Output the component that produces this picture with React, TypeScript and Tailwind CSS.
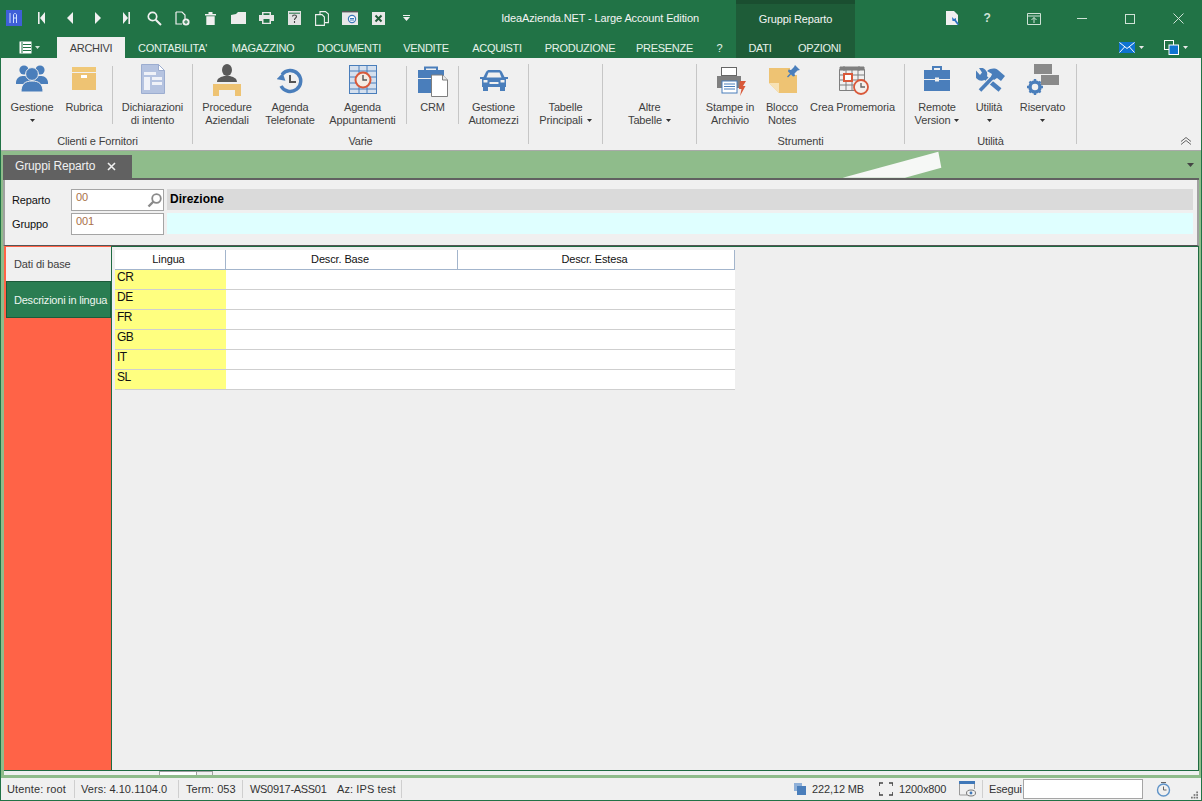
import React from "react";

const B = "#4a7ebb";
const Tan = "#eec373";
const G = "#7f7f7f";
const R = "#d9593a";

const Caret = ({ c = "#333" }: { c?: string }) => (
  <svg width="5" height="3" viewBox="0 0 5 3" className="inline-block"><path d="M0 0h5L2.5 3z" fill={c} /></svg>
);

const Q = ({ children }: { children: React.ReactNode }) => (
  <div className="w-[28px] h-full flex items-center justify-center">{children}</div>
);

const quick = [
  <svg key="l" width="16" height="16" viewBox="0 0 16 16"><rect width="16" height="16" fill="#3f5fd8" /><path d="M4 3v10M7.5 13V5c0-2 3-2 3 0v8M7.5 8h3" stroke="#cfe0ff" fill="none" /></svg>,
  <svg key="a" width="8" height="12" viewBox="0 0 8 12"><path d="M0 0h1.6v12H0zM7 0v12L2 6z" fill="#f0f0f0" /></svg>,
  <svg key="b" width="8" height="12" viewBox="0 0 8 12"><path d="M7 0v12L1 6z" fill="#f0f0f0" /></svg>,
  <svg key="c" width="8" height="12" viewBox="0 0 8 12"><path d="M1 0v12l6-6z" fill="#f0f0f0" /></svg>,
  <svg key="d" width="8" height="12" viewBox="0 0 8 12"><path d="M1 0v12l5-6zM6.4 0H8v12H6.4z" fill="#f0f0f0" /></svg>,
  <svg key="e" width="15" height="15" viewBox="0 0 15 15"><circle cx="5.5" cy="5.5" r="4.2" stroke="#f0f0f0" strokeWidth="1.7" fill="none" /><path d="M8.7 8.7L14 14" stroke="#f0f0f0" strokeWidth="2" /></svg>,
  <svg key="f" width="15" height="15" viewBox="0 0 15 15"><path d="M1 1h6l3 3v4M1 1v12h6" stroke="#f0f0f0" strokeWidth="1.2" fill="none" /><circle cx="11" cy="11" r="3.6" fill="#f0f0f0" /><path d="M11 9v4M9 11h4" stroke="#217346" /></svg>,
  <svg key="g" width="11" height="13" viewBox="0 0 11 13"><path d="M0 2h11v1.4H0zM3.5 0h4v2h-4zM1.3 4.2h8.4V13H1.3z" fill="#f0f0f0" /></svg>,
  <svg key="h" width="15" height="12" viewBox="0 0 15 12"><path d="M0 3l5-1 2-2h8v12H0z" fill="#ececec" /></svg>,
  <svg key="i" width="15" height="12" viewBox="0 0 15 12"><path d="M3 0h9v3h3v6h-3v3H3V9H0V3h3z" fill="#e6e6e6" /><path d="M4.5 1.2h6V3h-6zM4.5 7h6v3.8h-6z" fill="#217346" /></svg>,
  <svg key="j" width="13" height="14" viewBox="0 0 13 14"><path d="M0 0h13v14H0z" fill="#e2e2e2" /><path d="M1 2.2h11" stroke="#217346" /><path d="M4.5 5.5c0-2 4-2 4 0 0 1.500-2 1.500-2 3.500M6.500 10v2" stroke="#444" fill="none" strokeWidth="1.1" /></svg>,
  <svg key="k" width="14" height="15" viewBox="0 0 14 15"><path d="M5 3V.6h5.5L13.4 3v8.6H10M.6 3.6H7l2.4 2.4v8.4H.6z" stroke="#f0f0f0" strokeWidth="1.1" fill="none" /></svg>,
  <svg key="m" width="16" height="14" viewBox="0 0 16 14"><rect width="16" height="14" fill="#e8e8e8" /><rect y="0" width="16" height="1.4" fill="#555" /><circle cx="10" cy="8" r="3.6" fill="#fff" stroke="#3a78b8" strokeWidth="1.2" /><path d="M8 7.5h4M8 9h4" stroke="#3a78b8" /></svg>,
  <svg key="n" width="13" height="13" viewBox="0 0 13 13"><rect width="13" height="13" fill="#e8e8e8" /><path d="M3.5 3.5l6 6M9.5 3.5l-6 6" stroke="#1e5c38" strokeWidth="2" /></svg>,
  <svg key="o" width="7" height="6" viewBox="0 0 7 6"><path d="M0 0h7v1H0zM0 2h7L3.5 6z" fill="#f0f0f0" /></svg>,
];

const Btn = ({ w, icon, l1, l2, caret }: { w: string; icon?: React.ReactNode; l1: string; l2?: string; caret?: "inline" | "below" }) => (
  <div className={`${w} shrink-0 flex flex-col items-center text-[#3f3f3f]`}>
    <div className="h-[43px] pt-[6px] flex justify-center items-start">{icon}</div>
    <div className="h-[13px] leading-[13px] whitespace-nowrap">{l1}</div>
    <div className="h-[13px] leading-[13px] whitespace-nowrap flex items-center justify-center gap-[4px]">
      {l2}
      {caret && <Caret />}
    </div>
  </div>
);

const Short = () => <div className="w-px h-[58px] mt-[8px] bg-[#c6c6c6] shrink-0" />;
const Full = () => <div className="w-px h-[80px] mt-[6px] bg-[#c6c6c6] shrink-0" />;
const Group = ({ w, label, children }: { w: string; label?: string; children: React.ReactNode }) => (
  <div className={`${w} shrink-0 flex flex-col`}>
    <div className="flex h-[77px]">{children}</div>
    <div className="h-[13px] leading-[13px] text-center text-[#3f3f3f]">{label}</div>
  </div>
);

const People = (
  <svg width="32" height="28" viewBox="0 0 32 28" fill={B}>
    <circle cx="8" cy="6" r="4.6" /><circle cx="24" cy="6" r="4.6" />
    <path d="M0 18c1-5 4-6 8-6s7 1 8 6v2H0zM16 18c1-5 4-6 8-6s7 1 8 6v2H16z" />
    <circle cx="16" cy="10" r="6.4" stroke="#f0f0f0" />
    <path d="M5 28c0-8 4-11 11-11s11 3 11 11z" stroke="#f0f0f0" />
  </svg>
);
const Box = (
  <svg width="24" height="23" viewBox="0 0 24 23" className="mt-[3px]"><rect width="24" height="5" fill="#f0c878" /><rect y="6" width="24" height="17" fill={Tan} /><rect x="9" y="8" width="6" height="3" fill="#fff" /></svg>
);
const Decl = (
  <svg width="24" height="30" viewBox="0 0 24 30"><path d="M.5.5h17l6 6v23H.5z" fill="#b5c3e0" stroke="#9cadd0" /><path d="M17.5.5v6h6z" fill="#fff" stroke="#9cadd0" /><path d="M3 8h12v3H3zM3 13h6v13H3zM11 13h10v3H11zM11 18h10v3H11z" fill="#f0f2f8" /></svg>
);
const Proc = (
  <svg width="28" height="32" viewBox="0 0 28 32"><ellipse cx="14" cy="6" rx="5" ry="6" fill="#595959" /><path d="M4 18c0-4 4-5 7-6h6c3 1 7 2 7 6z" fill="#595959" /><path d="M0 20h28v12h-6v-6H6v6H0z" fill={Tan} /></svg>
);
const Hist = (
  <svg width="26" height="26" viewBox="0 0 26 26" className="mt-[4px]"><path d="M5 6.5A10.5 10.5 0 1 1 4 18" fill="none" stroke={B} strokeWidth="3.4" /><path d="M0 12h9L5 5z" fill={B} transform="rotate(10 5 9)" /><path d="M13 7v7h6" fill="none" stroke="#555" strokeWidth="2" /></svg>
);
const Appt = (
  <svg width="28" height="29" viewBox="0 0 28 29" className="mt-[1px]"><rect x=".5" y=".5" width="27" height="28" fill="#d5e0ee" stroke={B} /><path d="M1 6h26M1 12h26M1 18h26M1 24h26M10 1v28M18 1v28" stroke={B} /><circle cx="14" cy="15" r="7.5" fill="#f4ece4" stroke={R} strokeWidth="2" /><path d="M14 10v5h4" stroke="#555" strokeWidth="1.4" fill="none" /></svg>
);
const Crm = (
  <svg width="30" height="31" viewBox="0 0 30 31" className="mt-[2px]"><path d="M7 5V1.5h12V5" stroke={B} strokeWidth="2" fill="none" /><rect y="4" width="26" height="8" fill={B} /><rect y="13" width="26" height="14" fill={B} /><path d="M13.5 9h11l5 5v16.500h-16z" fill="#fff" stroke="#7f7f7f" /><path d="M24.500 9v5h5" fill="#e8e8e8" stroke="#7f7f7f" /></svg>
);
const Car = (
  <svg width="28" height="21" viewBox="0 0 28 21" fill={B} className="mt-[6px]"><path d="M6 2c1-1.500 2-2 3-2h10c1 0 2 .5 3 2l2.500 5H28v2h-2v8H2V9H0V7h3.500z" /><rect x="3" y="16" width="5" height="5" /><rect x="20" y="16" width="5" height="5" /><path d="M6.500 7.500l2-5h11l2 5z" fill="#f0f0f0" /><path d="M3.500 10h4v2.500h-4zM20.500 10h4v2.500h-4zM9.500 12h9v2h-9z" fill="#f0f0f0" /></svg>
);
const Printer = (
  <svg width="29" height="29" viewBox="0 0 29 29" className="ml-[3px] mt-[3px]"><rect x="4.500" y=".5" width="15" height="8" fill="#fff" stroke="#666" /><path d="M0 9h24v12H0z" fill="#7f7f7f" /><rect x="5" y="14" width="15" height="12" fill="#fff" stroke={B} /><path d="M7 17h11M7 19.500h11M7 22h11" stroke={B} /><path d="M23 14h6l-3 5h2.500L23 29l1.500-7H22z" fill={R} /></svg>
);
const Note = (
  <svg width="31" height="30" viewBox="0 0 31 30" className="ml-[5px] mt-[1px]"><path d="M0 3h28v25H10L0 18z" fill={Tan} /><path d="M0 18h10v10z" fill="#f7e2b5" /><path d="M21 0h10v10H21z" fill="#f0f0f0" /><path d="M26 0l5 5-2.500 .5-3 3 .5 2.500-2 .5-2-2-3 3-1-1 3-3-2-2 .5-2 2.500.5 3-3z" fill={B} /></svg>
);
const Cal = (
  <svg width="30" height="30" viewBox="0 0 30 30" className="ml-[3px] mt-[1px]"><path d="M.5 4.500h25v21H.5zM.5 10h25M.5 15h25M.5 20h25M7 4v22M13 4v22M19 4v22" stroke={G} fill="none" /><path d="M5 1v5M20 1v5M1 2h24v3H1z" fill={G} stroke={G} /><rect x="5" y="9" width="8" height="7" fill="#fff" stroke={R} strokeWidth="2" /><circle cx="22" cy="22" r="7" fill="#f4f0ec" stroke={R} strokeWidth="1.800" /><path d="M22 18v4h4" stroke="#666" strokeWidth="1.400" fill="none" /></svg>
);
const Case = (
  <svg width="26" height="25" viewBox="0 0 26 25" className="mt-[2px]"><path d="M9 4V1h8v3" stroke={B} strokeWidth="2" fill="none" /><rect y="4" width="26" height="9" fill={B} /><rect y="14" width="26" height="11" fill={B} /><rect x="11" y="11.500" width="4" height="4" fill="#f0f0f0" /></svg>
);
const Tools = (
  <svg width="29" height="24" viewBox="0 0 29 24" className="ml-[3px] mt-[4px]">
    <path d="M6 7L24 22" stroke={B} strokeWidth="4.500" />
    <path d="M0 2.500a6.500 6.500 0 0 0 9 9l2-3.500a6.500 6.500 0 0 0-8-8l3 4.500-2 2.500z" fill={B} />
    <path d="M4 22.500L19 7" stroke="#f0f0f0" strokeWidth="6" />
    <path d="M4 22.500L19 7" stroke={B} strokeWidth="3.600" />
    <path d="M11 3c4-3 8-3 11-1l7 6-4 5-4-3-3 2-3-3 1-3z" fill={B} />
  </svg>
);
const Res = (
  <svg width="32" height="31" viewBox="0 0 32 31"><rect x="7" width="18" height="10" fill="#8a8a8a" /><rect x="14" y="11" width="18" height="10" fill="#8a8a8a" /><circle cx="8" cy="23" r="5" fill="none" stroke={B} strokeWidth="3.500" /><path d="M8 15v4M8 27v4M0 23h4M12 23h4M2.500 17.500l2.500 2.500M11 26l2.500 2.500M2.500 28.500L5 26M11 20l2.500-2.500" stroke={B} strokeWidth="2.400" /></svg>
);

const Tab = ({ w, label, active }: { w: string; label: string; active?: boolean }) => (
  <div className={`${w} h-full shrink-0 flex items-center justify-center whitespace-nowrap tracking-[-0.3px] pt-[1px] ${active ? "bg-[#f0f0f0] text-[#3f3f3f]" : "text-[#e6f2ea]"}`}>{label}</div>
);

const rows = ["CR", "DE", "FR", "GB", "IT", "SL"];

const Sb = ({ w, children }: { w?: string; children: React.ReactNode }) => (
  <div className={`${w ?? ""} h-full flex items-center shrink-0 whitespace-nowrap`}>{children}</div>
);
const SbSep = () => <div className="w-px h-[18px] bg-[#cfcfcf] shrink-0" />;

export default function App() {
  return (
    <div className="w-[1202px] h-[801px] flex flex-col bg-[#217346] overflow-hidden text-[11px] leading-[13px] tracking-[-0.13px] text-[#222]" style={{ fontFamily: '"Liberation Sans", Arial, sans-serif' }}>
      {/* title bar */}
      <div className="h-[37px] flex shrink-0 items-stretch">
        <div className="w-[464px] flex pb-[1px]">{quick.map((q, i) => <Q key={i}>{q}</Q>)}</div>
        <div className="w-[272px] flex items-center justify-center text-[#f4f4f4]">IdeaAzienda.NET - Large Account Edition</div>
        <div className="w-[119px] bg-[#1e5c38] border-t-[4px] border-t-[#1a4e30] flex items-center justify-center text-[#f4f4f4] pb-[3px]">Gruppi Reparto</div>
        <div className="flex-1 flex items-center">
          <div className="w-[116px] flex justify-center pl-[80px]">
            <svg width="14" height="15" viewBox="0 0 14 15"><path d="M0 0h8l4 4v10H0z" fill="#f0f0f0" /><path d="M6 6l2 2 2-1v2l3 4-1.500 1-3-4-2 0z" fill="#2b72c0" /></svg>
          </div>
          <div className="w-[32px] flex justify-center text-[#cfe2d6] font-bold text-[12px]">?</div>
          <div className="w-[62px] flex justify-center"><svg width="14" height="12" viewBox="0 0 14 12"><path d="M.5.5h13v11H.500zM.5 3h13M7 10V4.500M4.500 7L7 4.500 9.500 7" stroke="#cfe2d6" fill="none" /></svg></div>
          <div className="w-[34px] flex justify-center"><div className="w-[10px] h-px bg-[#cfe2d6]" /></div>
          <div className="w-[62px] flex justify-center"><div className="w-[10px] h-[10px] border border-[#cfe2d6]" /></div>
          <div className="w-[34px] flex justify-center"><svg width="11" height="11" viewBox="0 0 11 11"><path d="M.5.5l10 10M10.500.5l-10 10" stroke="#cfe2d6" /></svg></div>
        </div>
      </div>
      {/* ribbon tabs */}
      <div className="h-[21px] flex shrink-0 items-stretch">
        <div className="w-[57px] flex items-center pl-[19px] gap-[3px]">
          <svg width="13" height="13" viewBox="0 0 13 13"><path d="M.5.5h12v12H.5z" fill="#fff" /><path d="M3 1v11M4 3.500h8M4 6.500h8M4 9.500h8" stroke="#217346" /></svg>
          <Caret c="#cfe2d6" />
        </div>
        <Tab w="w-[68px]" label="ARCHIVI" active />
        <Tab w="w-[95px]" label="CONTABILITA'" />
        <Tab w="w-[86px]" label="MAGAZZINO" />
        <Tab w="w-[86px]" label="DOCUMENTI" />
        <Tab w="w-[68px]" label="VENDITE" />
        <Tab w="w-[74px]" label="ACQUISTI" />
        <Tab w="w-[92px]" label="PRODUZIONE" />
        <Tab w="w-[77px]" label="PRESENZE" />
        <Tab w="w-[33px]" label="?" />
        <div className="w-[119px] bg-[#1e5c38] flex">
          <Tab w="w-[48px]" label="DATI" />
          <Tab w="w-[71px]" label="OPZIONI" />
        </div>
        <div className="flex-1 flex items-center pl-[264px] gap-[4px]">
          <svg width="16" height="11" viewBox="0 0 16 11"><rect width="16" height="11" fill="#0f74d1" /><path d="M.5.5L8 6.500 15.500.5M.5 10.500L5.500 5M15.500 10.500L10.500 5" stroke="#fff" fill="none" /></svg>
          <Caret c="#e8e8e8" />
          <svg width="15" height="15" viewBox="0 0 15 15" className="ml-[16px]"><rect x=".5" y=".5" width="9" height="9" fill="#217346" stroke="#fff" /><rect x="5" y="5" width="9.500" height="9.500" fill="#0f74d1" stroke="#fff" /></svg>
          <Caret c="#e8e8e8" />
        </div>
      </div>
      {/* ribbon */}
      <div className="h-[93px] shrink-0 ml-px mr-px bg-[#f0f0f0] border-b border-b-[#a9a9a9] flex pl-[2px]">
        <Group w="w-[189px]" label="Clienti e Fornitori">
          <Btn w="w-[58px]" icon={People} l1="Gestione" caret="below" />
          <Btn w="w-[46px]" icon={Box} l1="Rubrica" />
          <div className="w-[5px]" />
          <Short />
          <Btn w="w-[79px]" icon={Decl} l1="Dichiarazioni" l2="di intento" />
        </Group>
        <Full />
        <Group w="w-[335px]" label="Varie">
          <Btn w="w-[68px]" icon={Proc} l1="Procedure" l2="Aziendali" />
          <Btn w="w-[58px]" icon={Hist} l1="Agenda" l2="Telefonate" />
          <Btn w="w-[87px]" icon={Appt} l1="Agenda" l2="Appuntamenti" />
          <Short />
          <Btn w="w-[51px]" icon={Crm} l1="CRM" />
          <Short />
          <Btn w="w-[69px]" icon={Car} l1="Gestione" l2="Automezzi" />
        </Group>
        <Full />
        <Group w="w-[73px]"><Btn w="w-[73px]" l1="Tabelle" l2="Principali" caret="inline" /></Group>
        <Full />
        <Group w="w-[93px]"><Btn w="w-[93px]" l1="Altre" l2="Tabelle" caret="inline" /></Group>
        <Full />
        <Group w="w-[207px]" label="Strumenti">
          <Btn w="w-[66px]" icon={Printer} l1="Stampe in" l2="Archivio" />
          <Btn w="w-[38px]" icon={Note} l1="Blocco" l2="Notes" />
          <Btn w="w-[103px]" icon={Cal} l1="Crea Promemoria" />
        </Group>
        <Full />
        <Group w="w-[171px]" label="Utilità">
          <Btn w="w-[64px]" icon={Case} l1="Remote" l2="Version" caret="inline" />
          <Btn w="w-[40px]" icon={Tools} l1="Utilità" caret="below" />
          <Btn w="w-[67px]" icon={Res} l1="Riservato" caret="below" />
        </Group>
        <Full />
        <div className="flex-1 flex items-end justify-end pb-[5px] pr-[9px]">
          <svg width="12" height="8" viewBox="0 0 12 8" fill="none" stroke="#666"><path d="M1 4.500L6 .5l5 4M1 7.500L6 3.500l5 4" /></svg>
        </div>
      </div>
      {/* middle */}
      <div className="flex-1 min-h-0 mx-px bg-[#8fbc8b] flex flex-col pl-[2px] pr-[1px]">
        <div className="h-[27px] shrink-0 flex items-end justify-between relative">
          <div className="w-[129px] h-[23px] bg-[#616161] text-[#f0f0f0] text-[12px] flex items-center pl-[12px]">
            <span className="w-[92px]">Gruppi Reparto</span>
            <svg width="9" height="9" viewBox="0 0 9 9"><path d="M1 1l7 7M8 1L1 8" stroke="#f0f0f0" strokeWidth="1.600" /></svg>
          </div>
          <svg width="100" height="27" viewBox="0 0 100 27" className="absolute left-[839px] top-0"><path d="M.7 26.700L96.300.7l3 16-36.300 10z" fill="#f6f8f6" /></svg>
          <svg width="7" height="4" viewBox="0 0 7 4" className="mb-[11px] mr-[6px]"><path d="M0 0h7L3.500 4z" fill="#444" /></svg>
        </div>
        <div className="h-[2px] shrink-0 bg-[#616161] mr-[1px]" />
        {/* header panel */}
        <div className="h-[66px] shrink-0 mr-[1px] bg-[#f0f0f0] border-l-2 border-r-2 border-[#a0a0a0] border-b border-b-[#555] pt-[9px] pl-[7px] pr-[4px] flex flex-col gap-[2px]">
          <div className="flex h-[22px] items-stretch">
            <div className="w-[59px] flex items-center pt-[1px] text-[#111]">Reparto</div>
            <div className="w-[93px] border border-[#a5a5a5] bg-white flex justify-between pl-[4px] pr-[1px] text-[#a9704a]">
              <span className="leading-[14px]">00</span>
              <svg width="15" height="15" viewBox="0 0 15 15" className="mt-[3px]"><circle cx="9.500" cy="5.500" r="4.300" stroke="#8a8a8a" strokeWidth="1.800" fill="none" /><path d="M6.500 8.500L1.500 13.500" stroke="#8a8a8a" strokeWidth="2.400" /></svg>
            </div>
            <div className="flex-1 ml-[3px] h-[21px] bg-[#dadada] flex items-center pl-[3px] font-bold text-[12px] tracking-normal text-black">Direzione</div>
          </div>
          <div className="flex h-[22px] items-stretch">
            <div className="w-[59px] flex items-center pt-[1px] text-[#111]">Gruppo</div>
            <div className="w-[93px] border border-[#a5a5a5] bg-white pl-[4px] text-[#a9704a] leading-[14px]">001</div>
            <div className="flex-1 ml-[3px] h-[21px] bg-[#dfffff]" />
          </div>
        </div>
        {/* content */}
        <div className="h-[525px] shrink-0 flex bg-[#f0f0f0] ml-px mr-[1px] border-r border-[#1f6b42] border-b border-b-[#1f6b42]">
          <div className="w-[107px] shrink-0 bg-[#ff6347] border-t border-t-[#ff6347] pl-[2px] flex flex-col">
            <div className="h-[34px] bg-[#f0f0f0] flex items-center pl-[8px] pt-[1px] text-[#3f3f3f]">Dati di base</div>
            <div className="h-[37px] bg-[#2a7d52] border border-[#1d5a3a] flex items-center pl-[7px] pt-[1px] whitespace-nowrap tracking-[-0.22px] text-[#eef6f0]">Descrizioni in lingua</div>
          </div>
          <div className="flex-1 border-l border-l-[#1f6b42] border-t border-t-[#1f6b42] bg-[#efefef] pt-[3px] pl-[3px]">
            <div className="w-[620px]">
              <div className="flex h-[20px] bg-white border-b border-b-[#a3b5cc] text-[#111]">
                <div className="w-[111px] border-r border-r-[#a3b5cc] flex items-center justify-center pr-[3px]">Lingua</div>
                <div className="w-[232px] border-r border-r-[#a3b5cc] flex items-center justify-center pr-[3px]">Descr. Base</div>
                <div className="flex-1 border-r border-r-[#a3b5cc] flex items-center justify-center pr-[3px]">Descr. Estesa</div>
              </div>
              {rows.map((r) => (
                <div key={r} className="flex h-[20px] bg-white border-b border-b-[#cfcfcf]">
                  <div className="w-[111px] bg-[#ffff80] pl-[2px] text-[12px] tracking-[-0.5px] leading-[15px] text-[#111]">{r}</div>
                </div>
              ))}
            </div>
          </div>
        </div>
        {/* scroll remnants */}
        <div className="h-[4px] shrink-0 bg-[#f0f0f0] ml-px mr-[1px] flex items-stretch pl-[155px]">
          <div className="w-[38px] bg-white border border-[#a0a0a0] border-b-0" />
          <div className="w-[16px] bg-[#f0f0f0] border border-[#a0a0a0] border-b-0 border-l-0" />
        </div>
      </div>
      {/* status */}
      <div className="h-[22px] shrink-0 mx-px mb-px bg-[#f0f0f0] flex items-center text-[#333] pl-[6px] pr-[3px]">
        <Sb w="w-[67px]"><span className="tracking-[0.12px]">Utente: root</span></Sb>
        <SbSep />
        <Sb w="w-[103px]"><span className="pl-[6px] tracking-[0.05px]">Vers: 4.10.1104.0</span></Sb>
        <SbSep />
        <Sb w="w-[63px]"><span className="pl-[7px] tracking-[0.1px]">Term: 053</span></Sb>
        <SbSep />
        <Sb w="w-[94px]"><span className="pl-[7px] tracking-[-0.3px]">WS0917-ASS01</span></Sb>
        <Sb w="w-[64px]"><span className="tracking-[0.1px]">Az: IPS test</span></Sb>
        <SbSep />
        <Sb w="w-[392px]"><span /></Sb>
        <Sb w="w-[18px]">
          <svg width="12" height="12" viewBox="0 0 12 12"><rect width="8" height="8" fill="#8fb0d8" /><rect x="3" y="3" width="9" height="9" fill="#4a7ebb" /></svg>
        </Sb>
        <Sb w="w-[67px]">222,12 MB</Sb>
        <Sb w="w-[20px]">
          <svg width="14" height="14" viewBox="0 0 14 14" fill="none" stroke="#444" strokeWidth="1.600"><path d="M0 4V1h4M10 1h4v3M0 10v3h4M10 13h4v-3" /></svg>
        </Sb>
        <Sb w="w-[60px]">1200x800</Sb>
        <Sb w="w-[23px]">
          <svg width="17" height="16" viewBox="0 0 17 16"><rect width="16" height="3" fill="#3f78b8" /><path d="M.5 3v11h8M15.500 3v5" stroke="#9a9a9a" fill="none" /><ellipse cx="12" cy="12" rx="4.500" ry="3" fill="none" stroke="#777" /><circle cx="12" cy="12" r="1.400" fill="#3f78b8" /></svg>
        </Sb>
        <SbSep />
        <Sb w="w-[40px]"><span className="pl-[6px]">Esegui</span></Sb>
        <div className="w-[120px] h-[20px] bg-white border border-[#a5a5a5] shrink-0" />
        <Sb w="w-[48px]">
          <svg width="15" height="16" viewBox="0 0 15 16" className="ml-[13px]"><circle cx="7.500" cy="9" r="6" fill="none" stroke="#5f93c8" strokeWidth="1.400" /><path d="M5 1.500h5M7.500 5.500V9h3" stroke="#666" fill="none" /></svg>
        </Sb>
        <svg width="8" height="8" viewBox="0 0 8 8" className="ml-auto self-end mb-[1px]" fill="#777"><rect x="6" width="2" height="2" /><rect x="3" y="3" width="2" height="2" /><rect x="6" y="3" width="2" height="2" /><rect y="6" width="2" height="2" /><rect x="3" y="6" width="2" height="2" /><rect x="6" y="6" width="2" height="2" /></svg>
      </div>
    </div>
  );
}
